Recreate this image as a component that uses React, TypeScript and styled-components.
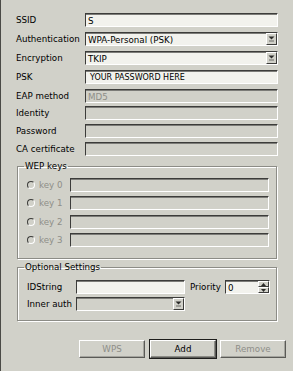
import React from 'react';
import styled, { createGlobalStyle } from 'styled-components';

const GlobalStyle = createGlobalStyle`
  html, body {
    margin: 0;
    padding: 0;
    background: #d1d1c9;
  }
  * {
    box-sizing: border-box;
  }
`;

const Window = styled.div`
  width: 293px;
  height: 371px;
  background: #d1d1c9;
  border-left: 1px solid #4a4a46;
  font-family: "DejaVu Sans", "Liberation Sans", sans-serif;
  font-size: 8.7px;
  color: #000;
  padding: 13px 15px 0 15px;
  overflow: hidden;
`;

const Row = styled.div<{ h: number }>`
  display: grid;
  grid-template-columns: 69px 1fr;
  align-items: start;
  height: ${({ h }) => h}px;
`;

const Label = styled.span<{ disabled?: boolean }>`
  line-height: 14px;
  white-space: nowrap;
  color: ${({ disabled }) => (disabled ? '#8e8e88' : '#000')};
`;

const Field = styled.div<{ disabled?: boolean; w?: number }>`
  position: relative;
  height: 14px;
  width: ${({ w }) => (w ? `${w}px` : 'auto')};
  flex: none;
  background: ${({ disabled }) => (disabled ? '#d1d1c9' : '#f2f2ed')};
  border-top: 1px solid #3c3c3a;
  border-left: 1px solid #3c3c3a;
  border-right: 1px solid #ffffff;
  border-bottom: 1px solid #ffffff;
  box-shadow: inset 0 1px 0 #7c7c78;
  display: flex;
  align-items: center;
  padding: 1px 2px 0 2px;
  line-height: 12px;
  white-space: nowrap;
  color: ${({ disabled }) => (disabled ? '#8e8e88' : '#000')};
`;

const FieldText = styled.span<{ small?: boolean; indent?: number }>`
  font-size: ${({ small }) => (small ? '8px' : 'inherit')};
  padding-left: ${({ indent }) => indent ?? 0}px;
`;

const ArrowButton = styled.span`
  position: absolute;
  right: 0;
  top: 0;
  width: 11px;
  height: 12px;
  background: #d1d1c9;
  border-top: 1px solid #ffffff;
  border-left: 1px solid #ffffff;
  border-right: 1px solid #3c3c3a;
  border-bottom: 1px solid #3c3c3a;
  display: flex;
  align-items: center;
  justify-content: center;
  svg {
    display: block;
  }
`;

const SpinButtons = styled.span`
  position: absolute;
  right: 0;
  top: 0;
  width: 11px;
  height: 12px;
  display: flex;
  flex-direction: column;
`;

const SpinHalf = styled.span`
  flex: 1;
  background: #d1d1c9;
  border-top: 1px solid #ffffff;
  border-left: 1px solid #ffffff;
  border-right: 1px solid #3c3c3a;
  border-bottom: 1px solid #3c3c3a;
  display: flex;
  align-items: center;
  justify-content: center;
`;

const Group = styled.fieldset<{ mt: number; pt: number; pb: number }>`
  margin: ${({ mt }) => mt}px 1px 0 1px;
  padding: ${({ pt }) => pt}px 7px ${({ pb }) => pb}px 9px;
  border: 1px solid #8c8c86;
  box-shadow: 1px 1px 0 #ffffff, inset 1px 1px 0 #ffffff;
  min-width: 0;
`;

const Legend = styled.legend`
  padding: 0 1px;
  margin-left: -3px;
  line-height: 11px;
  color: #000;
`;

const KeyRow = styled.div<{ h: number }>`
  display: grid;
  grid-template-columns: 43px 1fr;
  align-items: start;
  height: ${({ h }) => h}px;
`;

const RadioLabel = styled.div`
  display: flex;
  align-items: center;
  gap: 4px;
  height: 14px;
  color: #8e8e88;
  white-space: nowrap;
`;

const Radio = styled.span`
  width: 8px;
  height: 8px;
  border-radius: 50%;
  border: 1px solid;
  border-color: #3c3c3a #ffffff #ffffff #3c3c3a;
  background: #d1d1c9;
  flex: none;
`;

const OptRow = styled.div<{ h: number }>`
  display: flex;
  align-items: start;
  height: ${({ h }) => h}px;
`;

const OptLabel = styled.span<{ w: number; pl?: number }>`
  width: ${({ w }) => w}px;
  padding-left: ${({ pl }) => pl ?? 0}px;
  line-height: 14px;
  white-space: nowrap;
  flex: none;
`;

const ButtonBar = styled.div`
  display: flex;
  justify-content: flex-end;
  gap: 4px;
  margin-top: 19px;
  margin-right: -8px;
`;

const Button = styled.button<{ isDefault?: boolean }>`
  width: 66px;
  height: 18px;
  padding: 0;
  font-family: inherit;
  font-size: 8.7px;
  background: #d1d1c9;
  color: ${({ disabled }) => (disabled ? '#8e8e88' : '#000')};
  border-top: 1px solid #ffffff;
  border-left: 1px solid #ffffff;
  border-right: 1px solid #5a5a56;
  border-bottom: 1px solid #5a5a56;
  box-shadow: ${({ isDefault }) =>
    isDefault ? '0 0 0 1px #1e1e1c, inset -1px -1px 0 #8c8c86' : 'inset -1px -1px 0 #a4a49e'};
  margin-left: ${({ isDefault }) => (isDefault ? '1px' : '0')};
  cursor: default;
`;

const DownArrow: React.FC = () => (
  <svg width="7" height="6" viewBox="0 0 7 6">
    <path d="M0.5 0.5 L6.5 0.5 L3.5 3.5 Z" fill="#2a2a28" />
    <rect x="1" y="4.5" width="5" height="1" fill="#6a6a66" />
  </svg>
);

const TinyArrow: React.FC<{ up?: boolean }> = ({ up }) => (
  <svg width="5" height="3" viewBox="0 0 5 3">
    <path d={up ? 'M0 3 L5 3 L2.5 0 Z' : 'M0 0 L5 0 L2.5 3 Z'} fill="#2a2a28" />
  </svg>
);

const Combo: React.FC<{ value?: string; disabled?: boolean; w?: number }> = ({ value, disabled, w }) => (
  <Field disabled={disabled} w={w}>
    <FieldText>{value}</FieldText>
    <ArrowButton>
      <DownArrow />
    </ArrowButton>
  </Field>
);

const keys = ['key 0', 'key 1', 'key 2', 'key 3'];
const keyHeights = [18, 19, 18, 14];

const App: React.FC = () => {
  return (
    <>
      <GlobalStyle />
      <Window>
        <Row h={19}>
          <Label>SSID</Label>
          <Field>
            <FieldText>S</FieldText>
          </Field>
        </Row>
        <Row h={19}>
          <Label>Authentication</Label>
          <Combo value="WPA-Personal (PSK)" />
        </Row>
        <Row h={19}>
          <Label>Encryption</Label>
          <Combo value="TKIP" />
        </Row>
        <Row h={19}>
          <Label>PSK</Label>
          <Field>
            <FieldText small indent={2}>YOUR PASSWORD HERE</FieldText>
          </Field>
        </Row>
        <Row h={17}>
          <Label>EAP method</Label>
          <Field disabled>
            <FieldText>MD5</FieldText>
          </Field>
        </Row>
        <Row h={18}>
          <Label>Identity</Label>
          <Field disabled />
        </Row>
        <Row h={18}>
          <Label>Password</Label>
          <Field disabled />
        </Row>
        <Row h={14}>
          <Label>CA certificate</Label>
          <Field disabled />
        </Row>

        <Group mt={5} pt={6} pb={11}>
          <Legend>WEP keys</Legend>
          {keys.map((k, i) => (
            <KeyRow key={k} h={keyHeights[i]}>
              <RadioLabel>
                <Radio />
                <span>{k}</span>
              </RadioLabel>
              <Field disabled />
            </KeyRow>
          ))}
        </Group>

        <Group mt={3} pt={7} pb={9}>
          <Legend>Optional Settings</Legend>
          <OptRow h={17}>
            <OptLabel w={49}>IDString</OptLabel>
            <Field w={109} />
            <OptLabel w={40} pl={5}>Priority</OptLabel>
            <Field w={45}>
              <FieldText>0</FieldText>
              <SpinButtons>
                <SpinHalf>
                  <TinyArrow up />
                </SpinHalf>
                <SpinHalf>
                  <TinyArrow />
                </SpinHalf>
              </SpinButtons>
            </Field>
          </OptRow>
          <OptRow h={14}>
            <OptLabel w={49}>Inner auth</OptLabel>
            <Combo disabled w={109} />
          </OptRow>
        </Group>

        <ButtonBar>
          <Button disabled>WPS</Button>
          <Button isDefault>Add</Button>
          <Button disabled>Remove</Button>
        </ButtonBar>
      </Window>
    </>
  );
};

export default App;
